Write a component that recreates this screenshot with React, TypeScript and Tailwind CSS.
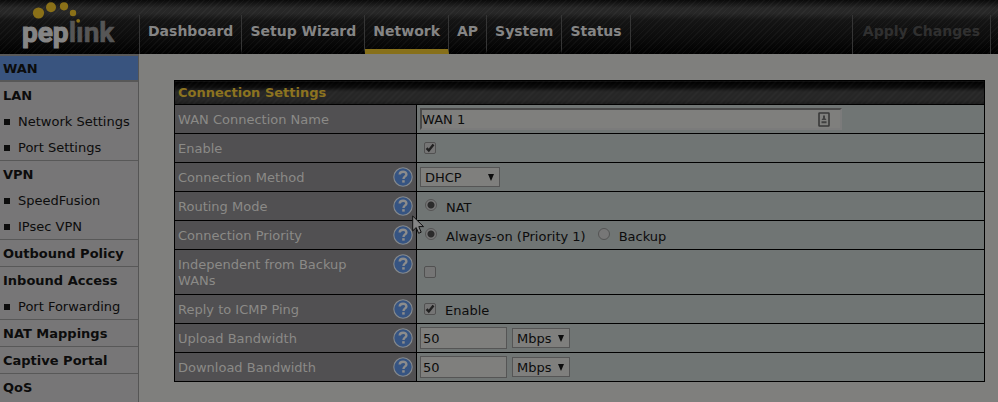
import type { ReactNode } from "react";

type Section = { label: string; active?: boolean; children?: string[] };

const TABS = ["Dashboard", "Setup Wizard", "Network", "AP", "System", "Status"];

const SECTIONS: Section[] = [
  { label: "WAN", active: true },
  { label: "LAN", children: ["Network Settings", "Port Settings"] },
  { label: "VPN", children: ["SpeedFusion", "IPsec VPN"] },
  { label: "Outbound Policy" },
  { label: "Inbound Access", children: ["Port Forwarding"] },
  { label: "NAT Mappings" },
  { label: "Captive Portal" },
  { label: "QoS" },
];

export default function App() {
  return (
    <div className="relative flex h-screen flex-col overflow-hidden bg-[#7f7f7d] font-['DejaVu_Sans',Verdana,sans-serif] text-[13px] leading-4 text-[#0c0c0c]">
      <Header />
      <div className="flex min-h-0 flex-1">
        <Sidebar />
        <main className="min-w-0 flex-1 pt-[26px] pr-[13px] pl-[35px]">
          <ConnectionSettings />
        </main>
      </div>
      <Pointer />
    </div>
  );
}

function Header() {
  return (
    <header className="flex h-[54px] shrink-0 items-end bg-[repeating-linear-gradient(135deg,#ffffff08_0px,#ffffff08_1px,transparent_1px,transparent_4px),linear-gradient(#0a0a0a_0px,#272727_8px,#272727_13px,#151515_20px,#0d0d0d_36px,#000000_54px)] text-sm leading-5 font-bold text-[#858585]">
      <a href="#home" className="w-[139px] shrink-0" aria-label="peplink">
        <Logo />
      </a>
      <nav className="flex border-l border-[#353535]">
        {TABS.map((tab) => (
          <a
            key={tab}
            href="#tab"
            className={`h-[39px] border-r border-b-[5px] border-r-[#353535] px-2 pt-1.5 whitespace-nowrap ${
              tab === "Network" ? "border-b-[#87701a]" : "border-b-transparent"
            }`}
          >
            {tab}
          </a>
        ))}
      </nav>
      <button
        type="button"
        disabled
        className="mr-[7px] ml-auto h-[39px] border-x border-[#353535] px-2.5 pb-[7px] text-[#303030]"
      >
        Apply Changes
      </button>
    </header>
  );
}

function Logo() {
  return (
    <svg viewBox="0 0 139 54" className="block h-[54px] w-[139px]">
      <text x="22" y="42" fontFamily="Roboto, sans-serif" fontWeight="700" fontSize="28" fill="#858585" stroke="#858585" strokeWidth="1.1">
        pep
        <tspan fill="#565656" stroke="#565656" strokeWidth="0.6">
          l&#x131;nk
        </tspan>
      </text>
      <g fill="#8a7018">
        <circle cx="38.5" cy="13" r="5.6" />
        <circle cx="51" cy="7.3" r="5" />
        <circle cx="64" cy="6.3" r="4.1" />
        <circle cx="73" cy="13" r="3.2" />
        <circle cx="78.2" cy="20.8" r="1.9" />
      </g>
    </svg>
  );
}

function Sidebar() {
  return (
    <aside className="w-[139px] shrink-0 border-r border-[#555555] bg-[#777677]">
      {SECTIONS.map((section) => (
        <div
          key={section.label}
          className={`border-b border-[#585858] last:border-b-0 ${section.active ? "border-t-2 border-b-2 bg-[#39547f]" : ""}`}
        >
          <a
            href="#section"
            className={`flex items-center pt-0.5 pl-[3px] font-bold whitespace-nowrap ${section.active ? "h-6" : "h-[26px]"}`}
          >
            {section.label}
          </a>
          {section.children && (
            <ul>
              {section.children.map((child) => (
                <li key={child} className="flex h-[26px] items-center gap-2 pt-0.5 pl-1">
                  <span className="size-1.5 bg-[#0c0c0c]" />
                  <a href="#page" className="whitespace-nowrap">
                    {child}
                  </a>
                </li>
              ))}
            </ul>
          )}
        </div>
      ))}
    </aside>
  );
}

function ConnectionSettings() {
  return (
    <table className="w-full table-fixed border-collapse border border-black">
      <colgroup>
        <col className="w-[242px]" />
        <col />
      </colgroup>
      <thead>
        <tr>
          <th
            colSpan={2}
            className="h-6 border border-black bg-[repeating-linear-gradient(135deg,#ffffff08_0px,#ffffff08_1px,transparent_1px,transparent_4px),linear-gradient(#000000_0px,#0c0c0c_6px,#262626_10px,#262626_18px,#191919_24px)] px-[3px] text-left text-[#8c7320]"
          >
            Connection Settings
          </th>
        </tr>
      </thead>
      <tbody>
        <Row label="WAN Connection Name" htmlFor="name">
          <div className="flex w-[422px] max-w-full items-center border-2 border-t-[#4a4a4a] border-r-[#7b7b7b] border-b-[#7b7b7b] border-l-[#4a4a4a] bg-[#7f7f7d] pr-2.5">
            <input id="name" defaultValue="WAN 1" className="h-[18px] min-w-0 flex-1 outline-none" />
            <ContactIcon />
          </div>
        </Row>
        <Row label="Enable" htmlFor="enable">
          <Checkbox id="enable" checked />
        </Row>
        <Row label="Connection Method" htmlFor="method" help>
          <Select id="method" options={["DHCP", "Static IP", "PPPoE"]} className="w-20" />
        </Row>
        <Row label="Routing Mode" help>
          <Radio name="routing" label="NAT" checked />
        </Row>
        <Row label="Connection Priority" help>
          <Radio name="priority" label="Always-on (Priority 1)" checked />
          <Radio name="priority" label="Backup" />
        </Row>
        <Row label="Independent from Backup WANs" htmlFor="independent" help>
          <Checkbox id="independent" />
        </Row>
        <Row label="Reply to ICMP Ping" help>
          <Checkbox id="icmp" checked />
          <label htmlFor="icmp" className="pt-1 pl-[9px]">
            Enable
          </label>
        </Row>
        <Row label="Upload Bandwidth" htmlFor="upload" help>
          <Bandwidth id="upload" />
        </Row>
        <Row label="Download Bandwidth" htmlFor="download" help>
          <Bandwidth id="download" />
        </Row>
      </tbody>
    </table>
  );
}

type RowProps = { label: string; htmlFor?: string; help?: boolean; children: ReactNode };

function Row({ label, htmlFor, help, children }: RowProps) {
  return (
    <tr>
      <th scope="row" className="border border-black bg-[#515052] p-0 text-left align-top font-normal text-[#8b8a87]">
        <div className="flex items-start justify-between gap-2 px-[3px]">
          <label htmlFor={htmlFor} className="max-w-[190px] pt-[7px] pb-[5px]">
            {label}
          </label>
          {help && <Help />}
        </div>
      </th>
      <td className="border border-black bg-[#707574] py-0 pr-1 pl-[3px]">
        <div className="flex items-center">{children}</div>
      </td>
    </tr>
  );
}

function Help() {
  return (
    <button type="button" aria-label="Help" className="mt-1 shrink-0">
      <svg viewBox="0 0 20 20" className="block size-5">
        <circle cx="10" cy="10" r="9.2" fill="#365482" stroke="#85898d" strokeWidth="1.1" />
        <path
          d="M6.7 7.6C6.7 5.7 8.1 4.8 10.1 4.8S13.4 5.9 13.4 7.4C13.4 9.4 10.5 9.4 10.5 11.9"
          fill="none"
          stroke="#8c8c8c"
          strokeWidth="2.4"
        />
        <rect x="9.2" y="13.2" width="2.5" height="2.4" fill="#8c8c8c" />
      </svg>
    </button>
  );
}

function Checkbox({ id, checked }: { id: string; checked?: boolean }) {
  return (
    <span className="ml-1 grid size-3 place-items-center">
      <input
        id={id}
        type="checkbox"
        defaultChecked={checked}
        className="peer col-start-1 row-start-1 size-3 appearance-none rounded-xs border border-[#515151] bg-[#757575]"
      />
      <svg
        viewBox="0 0 12 12"
        className="pointer-events-none invisible col-start-1 row-start-1 size-3 peer-checked:visible"
      >
        <path d="M2.6 6.2L4.8 8.5L9.5 2.6" fill="none" stroke="#202020" strokeWidth="2.4" />
      </svg>
    </span>
  );
}

function Radio({ name, label, checked }: { name: string; label: string; checked?: boolean }) {
  return (
    <label className="mr-[7px] flex items-start gap-[9px] pl-[5px] last:mr-0">
      <input
        type="radio"
        name={name}
        defaultChecked={checked}
        className="mt-0.5 size-3 appearance-none rounded-full border border-[#545454] bg-[#777777] checked:bg-[radial-gradient(circle,#2b2b2b_0px,#2b2b2b_3px,#777777_4px)]"
      />
      <span className="pt-[3px]">{label}</span>
    </label>
  );
}

function Select({ id, options, className }: { id: string; options: string[]; className: string }) {
  return (
    <span className={`grid items-center ${className}`}>
      <select
        id={id}
        className="col-start-1 row-start-1 h-5 w-full appearance-none border border-[#555555] bg-[#7f7f7d] pt-px pl-1 outline-none"
      >
        {options.map((option) => (
          <option key={option}>{option}</option>
        ))}
      </select>
      <svg viewBox="0 0 6 7" className="pointer-events-none col-start-1 row-start-1 mr-1.5 h-[7px] w-1.5 justify-self-end">
        <path d="M0 0H6L3 7Z" fill="#0c0c0c" />
      </svg>
    </span>
  );
}

function Bandwidth({ id }: { id: string }) {
  return (
    <div className="flex items-center gap-[5px]">
      <input
        id={id}
        defaultValue="50"
        className="h-[22px] w-[87px] border border-[#555555] bg-[#7f7f7d] px-0.5 outline-none"
      />
      <Select id={`${id}-unit`} options={["Mbps", "kbps"]} className="w-[58px]" />
    </div>
  );
}

function ContactIcon() {
  return (
    <svg viewBox="0 0 12 15" className="h-[15px] w-3 shrink-0">
      <rect x="1" y="1" width="10" height="13" rx="0.5" fill="none" stroke="#383838" strokeWidth="1.6" />
      <path d="M5 3.5H7V6L8.5 8H3.5L5 6ZM3.5 9.2H8.5V11.2H3.5Z" fill="#404040" />
    </svg>
  );
}

// mouse pointer floating above the table
function Pointer() {
  return (
    <svg viewBox="0 0 13 20" className="pointer-events-none absolute top-[215px] left-[412px] h-5 w-[13px]">
      <path
        d="M0.7 1V15.8L4.2 12.6L6.6 18.3L9.2 17.2L6.8 11.6H11.5Z"
        fill="#858585"
        stroke="#111111"
        strokeWidth="1"
      />
    </svg>
  );
}
